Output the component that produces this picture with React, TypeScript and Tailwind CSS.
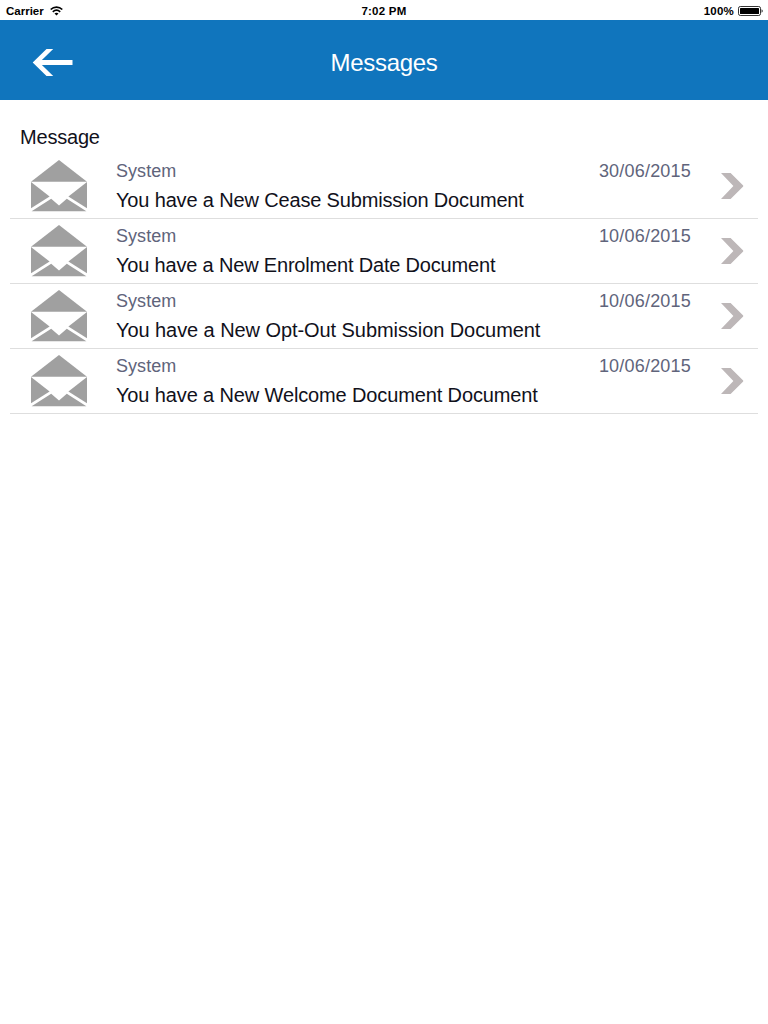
const messages = [
  { from: "System", date: "30/06/2015", subject: "You have a New Cease Submission Document", tracking: "tracking-[-0.155px]" },
  { from: "System", date: "10/06/2015", subject: "You have a New Enrolment Date Document", tracking: "tracking-[-0.18px]" },
  { from: "System", date: "10/06/2015", subject: "You have a New Opt-Out Submission Document", tracking: "tracking-[-0.07px]" },
  { from: "System", date: "10/06/2015", subject: "You have a New Welcome Document Document", tracking: "tracking-[-0.13px]" },
];

function WifiIcon() {
  return (
    <svg className="ml-[6px] h-[10px] w-[13px]" viewBox="0 0 13 10" fill="none" stroke="#000" strokeWidth="1.7">
      <path d="M0.7 3.5C4 0.3 9 0.3 12.3 3.5" />
      <path d="M2.8 5.9C5 3.9 8 3.9 10.2 5.9" />
      <path d="M6.5 9.4L4.5 7.5C5.7 6.5 7.3 6.5 8.5 7.5Z" fill="#000" stroke="none" />
    </svg>
  );
}

function BatteryIcon() {
  return (
    <svg className="ml-[4px] h-[10px] w-[25px]" viewBox="0 0 25 10" fill="none">
      <rect x="0.5" y="0.5" width="22" height="9" rx="1.8" stroke="#000" strokeWidth="0.8" />
      <rect x="2" y="2" width="19" height="6" rx="0.6" fill="#000" />
      <path d="M23.6 3.2C25 3.8 25 6.2 23.6 6.8Z" fill="#000" />
    </svg>
  );
}

function BackArrow() {
  return (
    <svg className="h-[28px] w-[41px]" viewBox="32 49 41 28" fill="#fff">
      <path d="M32.7 62.5L46.5 49H53.2L41.9 60H72.5V65H41.9L53.2 76H46.5Z" />
    </svg>
  );
}

function EnvelopeIcon() {
  return (
    <svg className="h-[52px] w-[56px] shrink-0" viewBox="0 0 56 52" fill="#a0a0a0">
      <path d="M28 0L56 21.8H0Z" />
      <path d="M0 22L18.6 36.6L0 48.2Z" />
      <path d="M56 22L37.4 36.6L56 48.2Z" />
      <path d="M20.2 38.7L28 45.5L35.8 38.7L55.4 51.3H0.6Z" />
    </svg>
  );
}

function Chevron() {
  return (
    <svg className="h-[26px] w-[23px]" viewBox="0 0 23 26" fill="#bdb7b8">
      <path d="M0 0H9.6L22.2 12.6V13.4L9.6 26H0L12.4 13Z" />
    </svg>
  );
}

export default function App() {
  return (
    <div className="flex h-screen flex-col bg-white font-['Liberation_Sans',Arial,sans-serif]">
      <div className="grid h-5 grid-cols-3 items-center pl-[6px] pr-[5px] text-[11.5px] font-bold text-black">
        <div className="flex items-center">
          <span className="pt-px leading-[20px]">Carrier</span>
          <WifiIcon />
        </div>
        <span className="pr-px pt-px text-center leading-[20px] tracking-[0.25px]">7:02 PM</span>
        <div className="flex items-center justify-end">
          <span className="pt-px leading-[20px] tracking-[0.2px]">100%</span>
          <BatteryIcon />
        </div>
      </div>
      <header className="grid h-20 grid-cols-3 items-center bg-[#1075bd] px-8 text-white">
        <button aria-label="Back" className="flex items-center pt-[5px]">
          <BackArrow />
        </button>
        <h1 className="pt-[5px] text-center text-[24px] leading-[30px] tracking-[-0.3px]">Messages</h1>
      </header>
      <main className="px-[10px] pt-[24px]">
        <h2 className="h-[30px] pl-[10px] text-[20px] leading-[27px] tracking-[-0.2px] text-[#11111b]">Message</h2>
        <ul>
          {messages.map((m) => (
            <li key={m.subject} className="flex h-[65px] border-b border-[#dedede] pl-[21px] pr-[14px] pt-[6px]">
              <EnvelopeIcon />
              <div className="ml-[29px] w-[575px]">
                <div className="flex justify-between text-[18px] leading-[22px] text-[#60647b]">
                  <span className="tracking-[0.05px]">{m.from}</span>
                  <span className="tracking-[0.2px]">{m.date}</span>
                </div>
                <p className={`pt-[6px] text-[20px] leading-[24px] text-[#11111b] ${m.tracking}`}>{m.subject}</p>
              </div>
              <div className="ml-auto pt-[13px]">
                <Chevron />
              </div>
            </li>
          ))}
        </ul>
      </main>
    </div>
  );
}
